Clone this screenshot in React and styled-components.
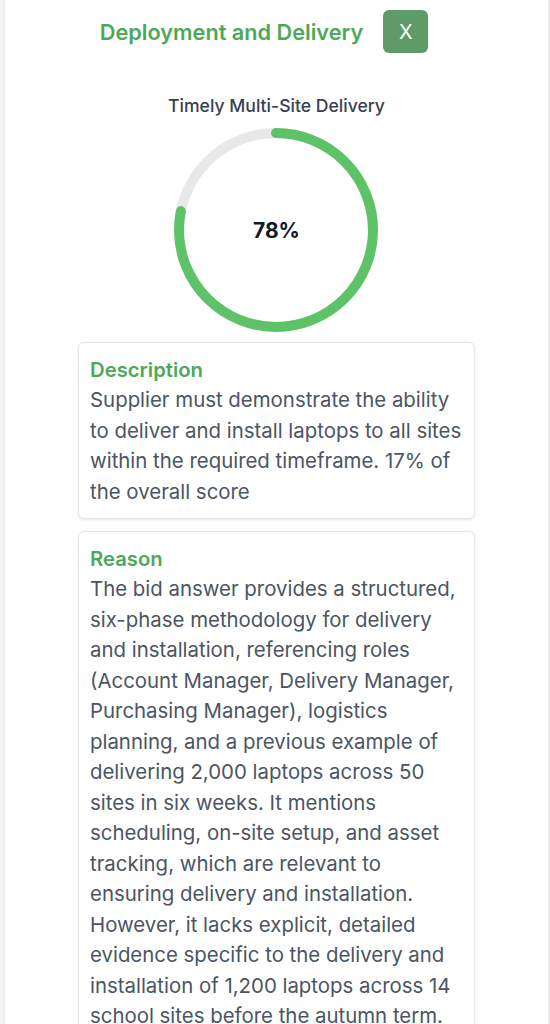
import React from "react";
import styled, { createGlobalStyle } from "styled-components";

const GlobalStyle = createGlobalStyle`
  html, body {
    margin: 0;
    padding: 0;
    background: #f4f4f4;
    font-family: Inter, "Noto Sans", sans-serif;
  }
`;

const Panel = styled.div`
  margin: 0 2px 0 5px;
  min-height: 1024px;
  background: #ffffff;
  box-shadow: 0 0 3px rgba(0, 0, 0, 0.12);
  display: flex;
  flex-direction: column;
  align-items: center;
`;

const Header = styled.div`
  display: flex;
  align-items: center;
  justify-content: center;
  gap: 20px;
  padding: 10px 25px 0 0;
`;

const Title = styled.h2`
  margin: 0;
  color: #4ea85a;
  font-size: 21.7px;
  font-weight: 600;
`;

const CloseButton = styled.button`
  width: 45px;
  height: 43px;
  border: none;
  border-radius: 6px;
  background: #5f9b68;
  color: #ffffff;
  font-family: Inter, sans-serif;
  font-size: 20px;
  font-weight: 400;
  cursor: pointer;
`;

const ChartBlock = styled.div`
  display: flex;
  flex-direction: column;
  align-items: center;
  margin-top: 42px;
  gap: 11px;
`;

const ChartLabel = styled.div`
  font-size: 17.6px;
  font-weight: 500;
  color: #374151;
`;

const RingWrap = styled.div`
  position: relative;
  width: 206px;
  height: 206px;
`;

const RingValue = styled.div`
  position: absolute;
  inset: 0;
  display: flex;
  align-items: center;
  justify-content: center;
  font-size: 21px;
  font-weight: 700;
  color: #111827;
`;

const Cards = styled.div`
  width: 397px;
  margin-top: 9px;
  display: flex;
  flex-direction: column;
  gap: 12px;
`;

const Card = styled.section`
  background: #ffffff;
  border: 1px solid #e5e7eb;
  border-radius: 6px;
  box-shadow: 0 1px 3px rgba(0, 0, 0, 0.1);
  padding: 12px 6px 11px 11px;
`;

const CardTitle = styled.h3`
  margin: 0;
  color: #4ea85a;
  font-size: 20.3px;
  font-weight: 600;
  line-height: 30px;
`;

const CardText = styled.p`
  margin: 0;
  color: #4b5563;
  font-size: 20.4px;
  line-height: 30.5px;
`;

const Ring = ({ value }) => {
  const r = 97;
  const c = 2 * Math.PI * r;
  return (
    <RingWrap>
      <svg width="206" height="206" viewBox="0 0 206 206">
        <circle cx="103" cy="103" r={r} fill="none" stroke="#e8e8e8" strokeWidth="10" />
        <circle
          cx="103"
          cy="103"
          r={r}
          fill="none"
          stroke="#5ec269"
          strokeWidth="10"
          strokeLinecap="round"
          strokeDasharray={`${(c * value) / 100} ${c}`}
          transform="rotate(-90 103 103)"
        />
      </svg>
      <RingValue>{value}%</RingValue>
    </RingWrap>
  );
};

const App = () => {
  return (
    <>
      <GlobalStyle />
      <Panel>
        <Header>
          <Title>Deployment and Delivery</Title>
          <CloseButton>X</CloseButton>
        </Header>
        <ChartBlock>
          <ChartLabel>Timely Multi-Site Delivery</ChartLabel>
          <Ring value={78} />
        </ChartBlock>
        <Cards>
          <Card>
            <CardTitle>Description</CardTitle>
            <CardText>
              Supplier must demonstrate the ability to deliver and install laptops to all sites
              within the required timeframe. 17% of the overall score
            </CardText>
          </Card>
          <Card>
            <CardTitle>Reason</CardTitle>
            <CardText>
              The bid answer provides a structured, six-phase methodology for delivery and
              installation, referencing roles (Account Manager, Delivery Manager, Purchasing
              Manager), logistics planning, and a previous example of delivering 2,000 laptops
              across 50 sites in six weeks. It mentions scheduling, on-site setup, and asset
              tracking, which are relevant to ensuring delivery and installation. However, it
              lacks explicit, detailed evidence specific to the delivery and installation of
              1,200 laptops across 14 school sites before the autumn term.
            </CardText>
          </Card>
        </Cards>
      </Panel>
    </>
  );
};

export default App;
